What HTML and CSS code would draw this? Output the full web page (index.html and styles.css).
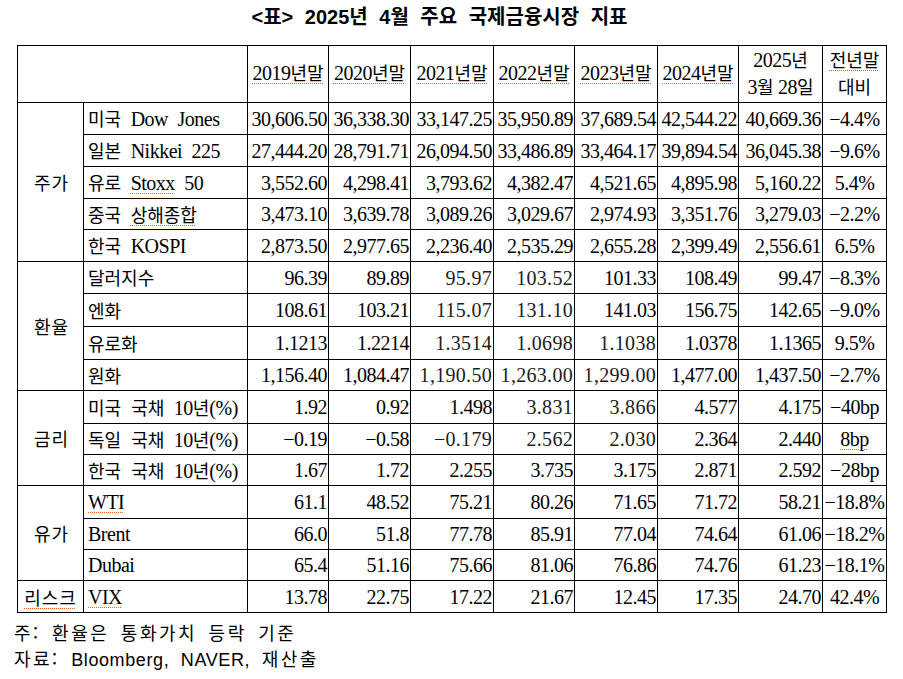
FILE: index.html
```html
<!DOCTYPE html>
<html lang="ko">
<head>
<meta charset="utf-8">
<title>2025년 4월 주요 국제금융시장 지표</title>
<link rel="stylesheet" href="styles.css">
</head>
<body>
<div class="page">
  <h1 class="title">&lt;표&gt; 2025년 4월 주요 국제금융시장 지표</h1>
  <table class="fin">
    <colgroup>
      <col class="c-cat"><col class="c-lab">
      <col class="c-81"><col class="c-82"><col class="c-83"><col class="c-81"><col class="c-83"><col class="c-81"><col class="c-84"><col class="c-64">
    </colgroup>
    <thead>
      <tr class="hdr">
        <th colspan="2"></th>
        <th><span class="sp">2019<span class="k">년말</span></span></th>
        <th><span class="sp">2020<span class="k">년말</span></span></th>
        <th><span class="sp">2021<span class="k">년말</span></span></th>
        <th><span class="sp">2022<span class="k">년말</span></span></th>
        <th><span class="sp">2023<span class="k">년말</span></span></th>
        <th><span class="sp">2024<span class="k">년말</span></span></th>
        <th class="two">2025<span class="k">년</span><br>3<span class="k">월</span> 28<span class="k">일</span></th>
        <th class="two"><span class="sp k">전년말</span><br><span class="k">대비</span></th>
      </tr>
    </thead>
    <tbody>
      <tr class="r32">
        <td class="cat" rowspan="5">주가</td>
        <td class="lab"><span class="k">미국</span> Dow Jones</td>
        <td>30,606.50</td><td>36,338.30</td><td>33,147.25</td><td>35,950.89</td><td>37,689.54</td><td>42,544.22</td><td>40,669.36</td><td class="pct">−4.4%</td>
      </tr>
      <tr class="dot r32">
        <td class="lab"><span class="k">일본</span> Nikkei 225</td>
        <td>27,444.20</td><td>28,791.71</td><td>26,094.50</td><td>33,486.89</td><td>33,464.17</td><td>39,894.54</td><td>36,045.38</td><td class="pct">−9.6%</td>
      </tr>
      <tr class="dot r32">
        <td class="lab"><span class="k">유로</span> <span class="sp">Stoxx</span> 50</td>
        <td>3,552.60</td><td>4,298.41</td><td>3,793.62</td><td>4,382.47</td><td>4,521.65</td><td>4,895.98</td><td>5,160.22</td><td class="pct">5.4%</td>
      </tr>
      <tr class="dot r31">
        <td class="lab"><span class="k">중국</span> <span class="k sp">상해종합</span></td>
        <td>3,473.10</td><td>3,639.78</td><td>3,089.26</td><td>3,029.67</td><td>2,974.93</td><td>3,351.76</td><td>3,279.03</td><td class="pct">−2.2%</td>
      </tr>
      <tr class="dot r32">
        <td class="lab"><span class="k">한국</span> KOSPI</td>
        <td>2,873.50</td><td>2,977.65</td><td>2,236.40</td><td>2,535.29</td><td>2,655.28</td><td>2,399.49</td><td>2,556.61</td><td class="pct">6.5%</td>
      </tr>
    </tbody>
    <tbody>
      <tr class="r32">
        <td class="cat" rowspan="4">환율</td>
        <td class="lab"><span class="k">달러지수</span></td>
        <td>96.39</td><td>89.89</td><td class="lt">95.97</td><td class="lt">103.52</td><td>101.33</td><td>108.49</td><td>99.47</td><td class="pct">−8.3%</td>
      </tr>
      <tr class="dot r33">
        <td class="lab"><span class="k">엔화</span></td>
        <td>108.61</td><td>103.21</td><td class="lt">115.07</td><td class="lt">131.10</td><td>141.03</td><td>156.75</td><td>142.65</td><td class="pct">−9.0%</td>
      </tr>
      <tr class="dot r33">
        <td class="lab"><span class="k">유로화</span></td>
        <td>1.1213</td><td>1.2214</td><td class="lt">1.3514</td><td class="lt">1.0698</td><td class="lt">1.1038</td><td>1.0378</td><td>1.1365</td><td class="pct">9.5%</td>
      </tr>
      <tr class="dot r31">
        <td class="lab"><span class="k">원화</span></td>
        <td>1,156.40</td><td>1,084.47</td><td class="lt">1,190.50</td><td class="lt">1,263.00</td><td class="lt">1,299.00</td><td>1,477.00</td><td>1,437.50</td><td class="pct">−2.7%</td>
      </tr>
    </tbody>
    <tbody>
      <tr class="r33">
        <td class="cat" rowspan="3">금리</td>
        <td class="lab"><span class="k">미국 국채</span> 10<span class="k">년</span>(%)</td>
        <td>1.92</td><td>0.92</td><td>1.498</td><td class="lt">3.831</td><td class="lt">3.866</td><td>4.577</td><td>4.175</td><td class="pct">−40bp</td>
      </tr>
      <tr class="dot r31">
        <td class="lab"><span class="k">독일 국채</span> 10<span class="k">년</span>(%)</td>
        <td>−0.19</td><td>−0.58</td><td class="lt">−0.179</td><td class="lt">2.562</td><td class="lt">2.030</td><td>2.364</td><td>2.440</td><td class="pct"><span class="sp">8bp</span></td>
      </tr>
      <tr class="dot r31">
        <td class="lab"><span class="k">한국 국채</span> 10<span class="k">년</span>(%)</td>
        <td>1.67</td><td>1.72</td><td>2.255</td><td>3.735</td><td>3.175</td><td>2.871</td><td>2.592</td><td class="pct">−28bp</td>
      </tr>
    </tbody>
    <tbody>
      <tr class="r33">
        <td class="cat" rowspan="3">유가</td>
        <td class="lab"><span class="sp">WTI</span></td>
        <td>61.1</td><td>48.52</td><td>75.21</td><td>80.26</td><td>71.65</td><td>71.72</td><td>58.21</td><td class="pct">−18.8%</td>
      </tr>
      <tr class="dot r31">
        <td class="lab">Brent</td>
        <td>66.0</td><td>51.8</td><td>77.78</td><td>85.91</td><td>77.04</td><td>74.64</td><td>61.06</td><td class="pct">−18.2%</td>
      </tr>
      <tr class="dot r31">
        <td class="lab">Dubai</td>
        <td>65.4</td><td>51.16</td><td>75.66</td><td>81.06</td><td>76.86</td><td>74.76</td><td>61.23</td><td class="pct">−18.1%</td>
      </tr>
    </tbody>
    <tbody>
      <tr class="r32">
        <td class="cat risk"><span class="sp">리스크</span></td>
        <td class="lab"><span class="sp">VIX</span></td>
        <td>13.78</td><td>22.75</td><td>17.22</td><td>21.67</td><td>12.45</td><td>17.35</td><td>24.70</td><td class="pct">42.4%</td>
      </tr>
    </tbody>
  </table>
  <div class="notes">
    <p>주: 환율은 통화가치 등락 기준</p>
    <p>자료: <span class="en">Bloomberg, NAVER,</span> 재산출</p>
  </div>
</div>
</body>
</html>
```

FILE: styles.css
```css
html, body {
  margin: 0;
  padding: 0;
  background: #fff;
  color: #000;
}

.page {
  width: 903px;
  padding-left: 17px;
  box-sizing: border-box;
}

.title {
  margin: 0;
  width: 869px;
  height: 45px;
  line-height: 34px;
  text-align: center;
  padding-right: 24px;
  box-sizing: border-box;
  font-family: "Liberation Sans", "Noto Sans CJK KR", sans-serif;
  font-size: 20px;
  font-weight: bold;
  word-spacing: 6px;
}

.fin {
  border-collapse: collapse;
  table-layout: fixed;
  width: 870px;
  font-family: "Liberation Serif", "Noto Sans CJK KR", serif;
  font-size: 20px;
  letter-spacing: -0.5px;
  line-height: 20px;
}

.c-cat { width: 66px; }
.c-lab { width: 164px; }
.c-81 { width: 81px; }
.c-82 { width: 82px; }
.c-83 { width: 83px; }
.c-84 { width: 84px; }
.c-64 { width: 64px; }

.fin th,
.fin td {
  border: 1px solid #000;
  padding: 0;
  vertical-align: middle;
  white-space: nowrap;
  overflow: hidden;
}

.fin th {
  font-weight: normal;
  text-align: center;
}

.hdr { height: 56px; }
.hdr th { padding-bottom: 3px; }
.hdr th.two { line-height: 26px; padding-bottom: 2px; }

.fin td {
  text-align: right;
  padding-right: 1px;
}

.fin tr.dot td {
  border-top: 1px dotted #000;
}

.r31 { height: 31px; }
.r32 { height: 32px; }
.r33 { height: 33px; }

.fin td.cat {
  text-align: center;
  padding: 0 0 0 2px;
  font-family: "Noto Sans CJK KR", sans-serif;
  font-size: 18px;
  letter-spacing: 1px;
}

.fin td.risk {
  padding: 0;
  letter-spacing: 1px;
}

.fin td.lab {
  text-align: left;
  padding-left: 4px;
  padding-right: 0;
  word-spacing: 5px;
}

.fin td.pct {
  text-align: center;
  padding: 0;
}

.fin td.lt {
  letter-spacing: 0.3px;
  color: #1c1c1c;
}

.k {
  font-family: "Noto Sans CJK KR", sans-serif;
  font-size: 18px;
  letter-spacing: 0;
}

.sp {
  text-decoration: underline dotted #e06a1a;
  text-decoration-thickness: 1px;
  text-underline-offset: 3px;
}

.notes {
  margin-top: 6px;
  margin-left: -3px;
  font-family: "Noto Sans CJK KR", sans-serif;
  font-size: 18px;
  line-height: 26px;
  word-spacing: 4px;
  letter-spacing: 2.5px;
}

.notes p {
  margin: 0;
}

.notes .en {
  font-family: "Liberation Sans", sans-serif;
  font-size: 18px;
  letter-spacing: 0.6px;
  word-spacing: 6px;
}
```
